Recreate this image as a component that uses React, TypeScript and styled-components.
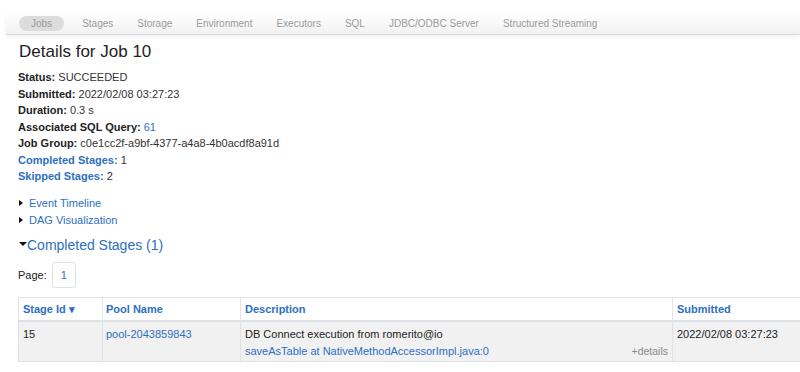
import React from "react";
import styled, { createGlobalStyle } from "styled-components";

const GlobalStyle = createGlobalStyle`
  html, body {
    margin: 0;
    padding: 0;
    background: #ffffff;
    overflow: hidden;
  }
  body {
    font-family: "Liberation Sans", Arial, sans-serif;
    font-size: 11px;
    color: #333333;
  }
`;

const LINK = "#2d6fc2";

const navItems = [
  "Jobs",
  "Stages",
  "Storage",
  "Environment",
  "Executors",
  "SQL",
  "JDBC/ODBC Server",
  "Structured Streaming",
];

const App = () => {
  return (
    <>
      <GlobalStyle />
      <NavBar>
        {navItems.map((item, i) => (
          <NavItem key={item} $active={i === 0}>
            {item}
          </NavItem>
        ))}
      </NavBar>
      <Page>
        <Title>Details for Job 10</Title>
        <InfoList>
          <li>
            <Label>Status:</Label> SUCCEEDED
          </li>
          <li>
            <Label>Submitted:</Label> 2022/02/08 03:27:23
          </li>
          <li>
            <Label>Duration:</Label> 0.3 s
          </li>
          <li>
            <Label>Associated SQL Query:</Label> <A>61</A>
          </li>
          <li>
            <Label>Job Group:</Label> c0e1cc2f-a9bf-4377-a4a8-4b0acdf8a91d
          </li>
          <li>
            <LinkLabel>Completed Stages:</LinkLabel> 1
          </li>
          <li>
            <LinkLabel>Skipped Stages:</LinkLabel> 2
          </li>
        </InfoList>

        <Toggles>
          <Toggle>
            <ArrowRight />
            <A>Event Timeline</A>
          </Toggle>
          <Toggle>
            <ArrowRight />
            <A>DAG Visualization</A>
          </Toggle>
        </Toggles>

        <SectionTitle>
          <ArrowDown />
          Completed Stages (1)
        </SectionTitle>

        <Pager>
          <span>Page:</span>
          <PageButton>1</PageButton>
        </Pager>

        <Table>
          <colgroup>
            <col style={{ width: 84 }} />
            <col style={{ width: 138 }} />
            <col style={{ width: 432 }} />
            <col style={{ width: 220 }} />
          </colgroup>
          <thead>
            <tr>
              <Th>Stage Id ▾</Th>
              <Th $pad={3}>Pool Name</Th>
              <Th>Description</Th>
              <Th>Submitted</Th>
            </tr>
          </thead>
          <tbody>
            <tr>
              <Td>15</Td>
              <Td $pad={3}>
                <A>pool-2043859843</A>
              </Td>
              <Td>
                <div>DB Connect execution from romerito@io</div>
                <DescLine>
                  <A>saveAsTable at NativeMethodAccessorImpl.java:0</A>
                  <Details>+details</Details>
                </DescLine>
              </Td>
              <Td>2022/02/08 03:27:23</Td>
            </tr>
          </tbody>
        </Table>
      </Page>
    </>
  );
};

export default App;

const NavBar = styled.nav`
  display: flex;
  align-items: center;
  margin: 12px 0 0 6px;
  height: 22px;
  padding-left: 13px;
  background: linear-gradient(#ffffff, #f1f1f1);
  border-bottom: 1px solid #dcdcdc;
  box-shadow: 0 2px 4px rgba(0, 0, 0, 0.06);
`;

const NavItem = styled.span<{ $active?: boolean }>`
  display: inline-flex;
  align-items: center;
  height: 15px;
  padding: 0 12px;
  margin-right: ${(p) => (p.$active ? "6px" : "0")};
  border-radius: 8px;
  font-size: 10px;
  color: #9a9a9a;
  white-space: nowrap;
  background: ${(p) => (p.$active ? "#dcdcdc" : "transparent")};
`;

const Page = styled.div`
  padding: 0 0 0 18px;
`;

const Title = styled.h3`
  margin: 7px 0 7px 1px;
  font-size: 17px;
  line-height: 20px;
  font-weight: normal;
  color: #222222;
  white-space: nowrap;
`;

const InfoList = styled.ul`
  list-style: none;
  margin: 0;
  padding: 0;
  line-height: 16.5px;
  white-space: nowrap;
`;

const Label = styled.strong`
  font-weight: bold;
  color: #222222;
`;

const LinkLabel = styled.strong`
  font-weight: bold;
  color: ${LINK};
`;

const A = styled.a`
  color: ${LINK};
  text-decoration: none;
  cursor: pointer;
`;

const Toggles = styled.div`
  margin-top: 10px;
  line-height: 17px;
`;

const Toggle = styled.div`
  display: flex;
  align-items: center;
  padding-left: 1px;
`;

const ArrowRight = styled.span`
  width: 0;
  height: 0;
  border-top: 3.5px solid transparent;
  border-bottom: 3.5px solid transparent;
  border-left: 4px solid #111111;
  margin-right: 6px;
`;

const ArrowDown = styled.span`
  display: inline-block;
  width: 0;
  height: 0;
  border-left: 4px solid transparent;
  border-right: 4px solid transparent;
  border-top: 4px solid #111111;
  vertical-align: middle;
  margin: 0 0 4px 1px;
`;

const SectionTitle = styled.h4`
  margin: 6px 0 0 0;
  font-size: 14px;
  line-height: 20px;
  font-weight: normal;
  color: ${LINK};
  white-space: nowrap;
`;

const Pager = styled.div`
  display: flex;
  align-items: center;
  gap: 5px;
  margin-top: 7px;
  color: #222222;
`;

const PageButton = styled.span`
  display: inline-flex;
  align-items: center;
  justify-content: center;
  width: 22px;
  height: 24px;
  border: 1px solid #dee2e6;
  border-radius: 3px;
  color: ${LINK};
  font-size: 11px;
`;

const Table = styled.table`
  margin-top: 9px;
  border-collapse: collapse;
  table-layout: fixed;
  width: 874px;
  white-space: nowrap;
`;

const Th = styled.th<{ $pad?: number }>`
  height: 21px;
  padding: 1px 4px 0 ${(p) => p.$pad ?? 4}px;
  text-align: left;
  font-weight: bold;
  color: ${LINK};
  border: 1px solid #e2e5e8;
  border-bottom: 2px solid #dee2e6;
  background: #ffffff;
`;

const Td = styled.td<{ $pad?: number }>`
  vertical-align: top;
  padding: 4px 4px 0 ${(p) => p.$pad ?? 4}px;
  height: 35px;
  line-height: 17px;
  border: 1px solid #dee2e6;
  background: #f1f1f1;
  color: #222222;
`;

const DescLine = styled.div`
  display: flex;
  justify-content: space-between;
  align-items: baseline;
`;

const Details = styled.span`
  font-size: 10.5px;
  color: #8a8a8a;
`;
